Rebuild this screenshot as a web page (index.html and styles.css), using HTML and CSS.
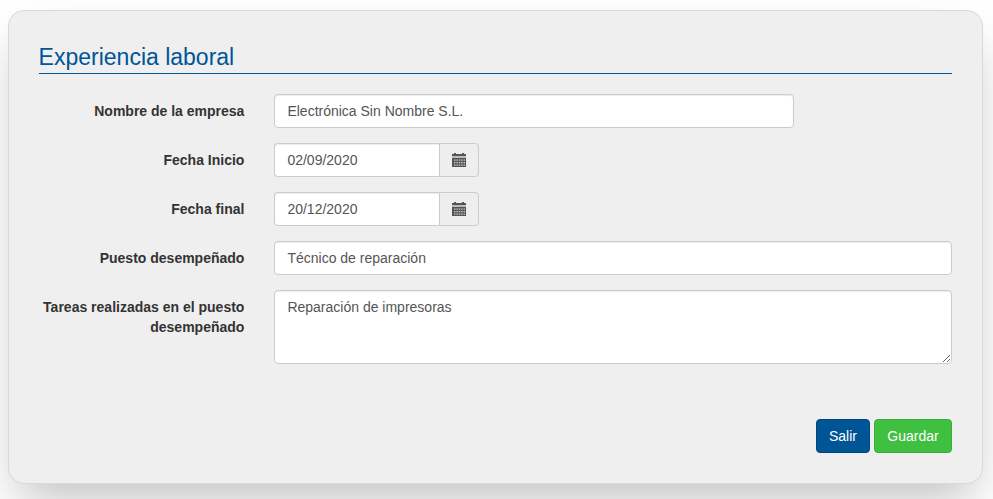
FILE: index.html
```html
<!DOCTYPE html>
<html lang="es">
<head>
<meta charset="utf-8">
<title>Experiencia laboral</title>
<link rel="stylesheet" href="styles.css">
</head>
<body>
<svg width="0" height="0" class="defs" aria-hidden="true">
  <symbol id="calendar" viewBox="0 0 14 14">
    <path class="head" d="M2 0h2v1h6V0h2v1h2v2H0V1h2z"/>
    <path class="band" d="M0 3h14v2H0z"/>
    <path class="head" d="M0 5h14v9H0z"/>
    <path class="cells" d="M2 6.5h1.5v1.2H2zM4.4 6.5h1.5v1.2H4.4zM6.8 6.5h1.5v1.2H6.8zM9.2 6.5h1.5v1.2H9.2zM11.6 6.5h1.4v1.2h-1.4zM2 9h1.5v1.2H2zM4.4 9h1.5v1.2H4.4zM6.8 9h1.5v1.2H6.8zM9.2 9h1.5v1.2H9.2zM11.6 9h1.4v1.2h-1.4zM2 11.5h1.5v1.2H2zM4.4 11.5h1.5v1.2H4.4zM6.8 11.5h1.5v1.2H6.8zM9.2 11.5h1.5v1.2H9.2zM11.6 11.5h1.4v1.2h-1.4z"/>
  </symbol>
</svg>
<form class="card">
  <h1 class="title">Experiencia laboral</h1>
  <div class="row">
    <label for="empresa">Nombre de la empresa</label>
    <input class="control company" id="empresa" type="text" value="Electrónica Sin Nombre S.L.">
  </div>
  <div class="row">
    <label for="inicio">Fecha Inicio</label>
    <div class="date">
      <input class="control" id="inicio" type="text" value="02/09/2020">
      <span class="addon"><svg class="icon"><use href="#calendar"/></svg></span>
    </div>
  </div>
  <div class="row">
    <label for="final">Fecha final</label>
    <div class="date">
      <input class="control" id="final" type="text" value="20/12/2020">
      <span class="addon"><svg class="icon"><use href="#calendar"/></svg></span>
    </div>
  </div>
  <div class="row">
    <label for="puesto">Puesto desempeñado</label>
    <input class="control" id="puesto" type="text" value="Técnico de reparación">
  </div>
  <div class="row">
    <label for="tareas">Tareas realizadas en el puesto desempeñado</label>
    <textarea class="control" id="tareas">Reparación de impresoras</textarea>
  </div>
  <div class="actions">
    <button class="btn exit" type="button">Salir</button>
    <button class="btn save" type="button">Guardar</button>
  </div>
</form>
</body>
</html>
```
FILE: styles.css
```css
* { box-sizing: border-box; }
body {
  height: 499px;
  margin: 0;
  padding: 10px 0 0 8px;
  overflow: hidden;
  background: #fff;
  color: #333;
  font: 14px/20px "Liberation Sans", Arial, sans-serif;
}
.defs { display: block; }
.card {
  width: 975px;
  height: 474px;
  padding: 30px 30px 0;
  background: #efefef;
  border: 1px solid #d8d8d8;
  border-radius: 16px;
  box-shadow: 0 25px 50px -10px rgba(0, 0, 0, .25);
}
.title {
  height: 33px;
  margin: 0 0 20px;
  color: #005596;
  border-bottom: 1px solid #005596;
  font-size: 23px;
  font-weight: 400;
  line-height: 32px;
  text-indent: -.4px;
}
.row {
  display: grid;
  grid-template-columns: 205.4px 677.6px;
  column-gap: 30px;
  margin-bottom: 15px;
}
label {
  padding-top: 7px;
  font-weight: 700;
  text-align: right;
}
.control {
  display: block;
  width: 100%;
  height: 34px;
  margin: 0;
  padding: 6px 12px;
  color: #555;
  background: #fff;
  border: 1px solid #ccc;
  border-radius: 4px;
  box-shadow: inset 0 1px 1px rgba(0, 0, 0, .075);
  font: inherit;
}
.company { width: 519.6px; }
textarea.control { height: 74px; resize: vertical; }
.date { display: flex; width: 204.6px; }
.date .control { width: 164.6px; border-right: 0; border-radius: 4px 0 0 4px; }
.addon {
  display: flex;
  align-items: center;
  padding-left: 12px;
  width: 40px;
  height: 34px;
  border: 1px solid #ccc;
  border-radius: 0 4px 4px 0;
  background: #eee;
}
.icon { width: 14px; height: 14px; }
.head { fill: #555; }
.band { fill: #bbb; }
.cells { fill: #c4ccd2; }
.actions {
  display: flex;
  justify-content: flex-end;
  gap: 4px;
  margin-top: 55px;
}
.btn {
  height: 34px;
  padding: 6px 12px;
  border: 1px solid;
  border-radius: 4px;
  color: #fff;
  font: inherit;
}
.exit { width: 54px; background: #005596; border-color: #00457c; }
.save { width: 78px; background: #40c040; border-color: #39ac39; }
```
